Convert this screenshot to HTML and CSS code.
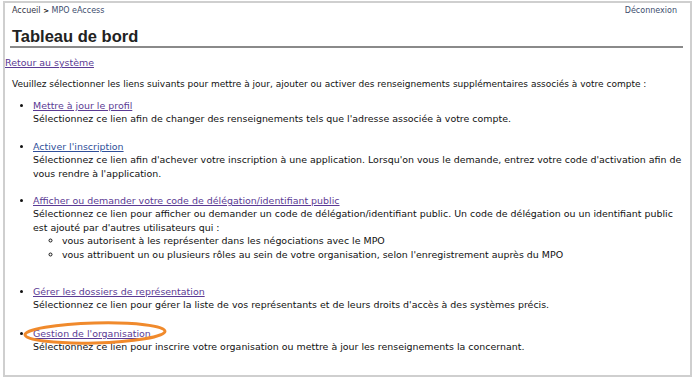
FILE: index.html
```html
<!DOCTYPE html>
<html lang="fr">
<head>
    <meta charset="UTF-8">
    <meta name="viewport" content="width=device-width, initial-scale=1.0">
    <title>Tableau de bord - MPO eAccess</title>
    <link rel="stylesheet" href="styles.css">
</head>
<body>
    <div class="cadre">
        <div class="entete">
            <div class="fil">
                <span><a href="#">Accueil</a> <b class="sep">&gt;</b> <a href="#">MPO eAccess</a></span>
                <a href="#">Déconnexion</a>
            </div>
            <h1 class="titre">Tableau de bord</h1>
        </div>

        <a class="retour" href="#">Retour au système</a>

        <p class="intro">Veuillez sélectionner les liens suivants pour mettre à jour, ajouter ou activer des renseignements supplémentaires associés à votre compte :</p>

        <ul class="liens">
            <li>
                <a class="vu" href="#">Mettre à jour le profil</a><br>
                Sélectionnez ce lien afin de changer des renseignements tels que l'adresse associée à votre compte.
            </li>
            <li>
                <a href="#">Activer l'inscription</a><br>
                Sélectionnez ce lien afin d'achever votre inscription à une application. Lorsqu'on vous le demande, entrez votre code d'activation afin de vous rendre à l'application.
            </li>
            <li>
                <a class="vu" href="#">Afficher ou demander votre code de délégation/identifiant public</a><br>
                Sélectionnez ce lien pour afficher ou demander un code de délégation/identifiant public. Un code de délégation ou un identifiant public est ajouté par d'autres utilisateurs qui :
                <ul class="sous">
                    <li>vous autorisent à les représenter dans les négociations avec le MPO</li>
                    <li>vous attribuent un ou plusieurs rôles au sein de votre organisation, selon l'enregistrement auprès du MPO</li>
                </ul>
            </li>
            <li>
                <a class="vu" href="#">Gérer les dossiers de représentation</a><br>
                Sélectionnez ce lien pour gérer la liste de vos représentants et de leurs droits d'accès à des systèmes précis.
            </li>
            <li class="marque">
                <a class="vu" href="#">Gestion de l'organisation</a><br>
                Sélectionnez ce lien pour inscrire votre organisation ou mettre à jour les renseignements la concernant.
                <svg class="cercle" width="146" height="26" viewBox="0 0 146 26">
                    <ellipse cx="73" cy="13" rx="70" ry="10" transform="rotate(-1.5 73 13)" fill="none" stroke="#f08a2c" stroke-width="3"/>
                </svg>
            </li>
        </ul>
    </div>
</body>
</html>
```

FILE: styles.css
```css
body {
    margin: 0;
    background-color: white;
    font-family: "DejaVu Sans", Verdana, sans-serif;
    font-size: 9px;
    color: #111;
}
a {
    color: #2f4f9a;
}
a.vu {
    color: #5b3a94;
}
.cadre {
    margin: 1px 8px 4px 3px;
    border: 2px solid #cfcfcf;
    height: 376px;
    box-sizing: border-box;
    padding-right: 4px;
}
.entete {
    margin: 0 3px 0 5px;
    border-bottom: 2px solid #8a8a8a;
}
.fil {
    display: flex;
    justify-content: space-between;
    font-size: 8px;
    line-height: 12px;
    padding: 2px 6px 0 2px;
}
.fil a {
    color: #334;
    text-decoration: none;
}
.fil a:last-child {
    color: #3d4d6d;
}
.sep {
    font-size: 7px;
}
.titre {
    font-family: "Liberation Sans", Arial, sans-serif;
    font-size: 16.5px;
    line-height: 20px;
    margin: 9px 0 0 2px;
    color: #222;
}
.retour {
    display: block;
    margin-top: 8px;
    font-size: 9.45px;
    line-height: 13.5px;
    color: #5b3a94;
}
.intro {
    margin: 8px 0 8px 7px;
    line-height: 13.5px;
}
.liens {
    margin: 0;
    padding-left: 28px;
    font-size: 9.45px;
    line-height: 13.4px;
}
.liens > li {
    margin-bottom: 14px;
}
.sous {
    list-style: circle;
    margin: 0 0 24px;
    padding-left: 29px;
}
.marque {
    position: relative;
    margin-top: 15px;
}
.cercle {
    position: absolute;
    left: -11px;
    top: -7px;
}
```
